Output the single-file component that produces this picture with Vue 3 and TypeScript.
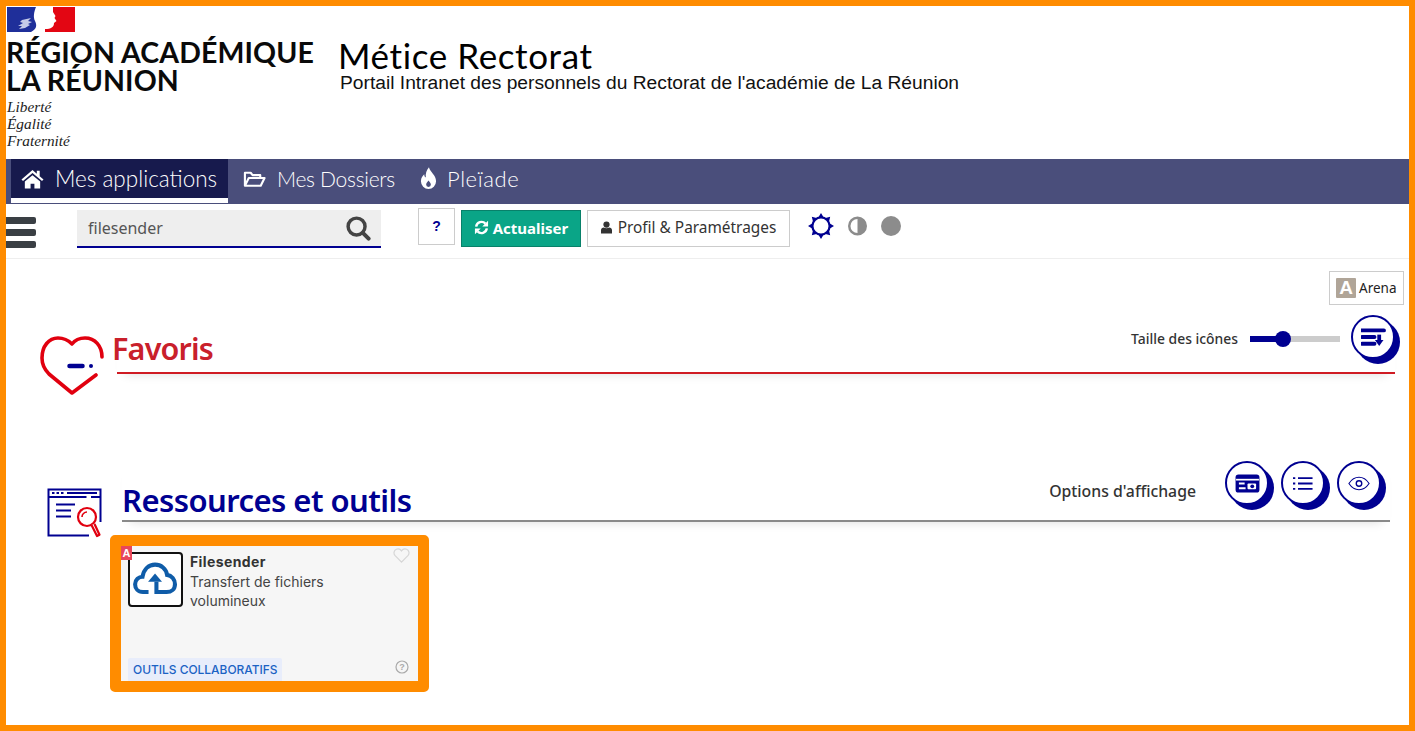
<script setup lang="ts">
</script>

<template>
  <div class="page">
    <header class="masthead">
      <div class="logo">
        <svg class="flag" viewBox="0 0 68 25" width="68" height="25">
          <rect width="68" height="25" fill="#fff" />
          <path d="M0 0H29C27 5 26 10 28 14 30 18 30 22 24 25H0z" fill="#1f2f9a" />
          <path d="M46 0H68V25H38V22C44 22 47 20 47 16L49.500 14 47.500 11 48.500 9 46 5z" fill="#e30613" />
          <path d="M15 13l9-2-3 3 4 1-4 2 2 1-5 3-6 1 3-3-4 0 5-3-3-1z" fill="#c6cbe8" />
        </svg>
        <div class="region">RÉGION ACADÉMIQUE<br />LA RÉUNION</div>
        <div class="motto">Liberté<br />Égalité<br />Fraternité</div>
      </div>
      <div class="site">
        <h1>Métice Rectorat</h1>
        <p>Portail Intranet des personnels du Rectorat de l'académie de La Réunion</p>
      </div>
    </header>

    <nav class="nav">
      <a class="tab active">
        <svg viewBox="0 0 24 20" width="23" height="20"><path d="M12 0.5L0.5 10.500l1.600 1.700L12 3.800l9.900 8.400 1.600-1.700L19.500 7V1.500h-3v3z" fill="#fff" /><path d="M4 12.500L12 6l8 6.500V20h-6v-5h-4v5H4z" fill="#fff" /></svg>
        Mes applications
      </a>
      <a class="tab dossiers">
        <svg viewBox="0 0 24 18" width="23" height="18"><path d="M2 16V2.500h6l2 2.500h8v3M2 16l4-8h16.500l-4 8z" fill="none" stroke="#fff" stroke-width="2.200" stroke-linejoin="round" /></svg>
        Mes Dossiers
      </a>
      <a class="tab pleiade">
        <svg viewBox="0 0 18 24" width="17" height="23"><path fill-rule="evenodd" d="M9.500 0c1 5 7.500 8 7.500 15a8 8 0 0 1-16 0c0-4 2-6 3.500-7.500 0 2 .7 3 1.700 3.500C5.500 7 7 3 9.500 0zM9 14c-1 1.500-2.500 2.500-2.500 4.400a2.500 2.500 0 0 0 5 0C11.500 16.500 10 15.500 9 14z" fill="#fff" /></svg>
        Pleïade
      </a>
    </nav>

    <div class="toolbar">
      <div class="burger"><i></i><i></i><i></i></div>
      <div class="search">
        <span>filesender</span>
        <svg viewBox="0 0 26 26" width="25" height="25"><circle cx="11" cy="11" r="8.800" fill="none" stroke="#444" stroke-width="3.600" /><path d="M17.500 17.500l6 6" stroke="#444" stroke-width="4.200" stroke-linecap="round" /></svg>
      </div>
      <button class="btn help">?</button>
      <button class="btn refresh">
        <svg viewBox="0 0 16 16" width="15" height="15">
          <path d="M2.300 7A5.800 5.800 0 0 1 12.200 3.800M13.700 9A5.800 5.800 0 0 1 3.800 12.200" fill="none" stroke="#fff" stroke-width="2.600" />
          <path d="M15 0.800V7H8.800zM1 15.200V9H7.200z" fill="#fff" />
        </svg>
        Actualiser
      </button>
      <button class="btn profile">
        <svg viewBox="0 0 12 14" width="11" height="13"><circle cx="6" cy="3.800" r="3.400" fill="#333" /><path d="M0 13.500V10c0-2 1.500-3 3-3 1.800 1.200 4.200 1.200 6 0 1.500 0 3 1 3 3v3.500z" fill="#333" /></svg>
        Profil &amp; Paramétrages
      </button>
      <div class="themes">
        <svg viewBox="0 0 26 26" width="26" height="26">
          <g fill="#000091"><path d="M13 0l3 5h-6zM13 26l3-5h-6zM0 13l5 3v-6zM26 13l-5 3v-6zM3.800 3.800l5.700 1.400-4.300 4.300zM22.200 3.800l-5.700 1.400 4.300 4.300zM3.800 22.200l5.700-1.400-4.300-4.300zM22.200 22.200l-5.700-1.400 4.300-4.300z" /></g>
          <circle cx="13" cy="13" r="8.600" fill="#fff" stroke="#000091" stroke-width="2.200" />
        </svg>
        <svg viewBox="0 0 20 20" width="19" height="20"><circle cx="10" cy="10" r="8.700" fill="#fff" stroke="#8c8c8c" stroke-width="2.600" /><path d="M10 1a9 9 0 0 1 0 18z" fill="#8c8c8c" /></svg>
        <span class="grey-dot"></span>
      </div>
    </div>

    <div class="arena-row">
      <div class="arena"><b>A</b>Arena</div>
    </div>

    <section class="fav">
      <svg class="fav-icon" viewBox="0 0 64 59" width="64" height="59">
        <path d="M62 21C62 10 55 2 45 2 39 2 35 4 32 8 28 4 24 2 18 2 9 2 2 10 2 22c0 7 3 12 7 16l23 19 24-18" fill="none" stroke="#e1000f" stroke-width="3.600" stroke-linecap="round" stroke-linejoin="round" />
        <path d="M29.500 30h13" stroke="#000091" stroke-width="4.500" stroke-linecap="round" />
        <circle cx="51" cy="30" r="2" fill="#000091" />
      </svg>
      <div class="fav-head">
        <h2 class="fav-title">Favoris</h2>
        <div class="size-tool">
          <span>Taille des icônes</span>
          <div class="slider"><i class="fill"></i><i class="thumb"></i></div>
          <button class="round">
            <svg viewBox="0 0 26 20" width="25" height="19"><path d="M1 2.500h23M1 9.500h13M1 16.500h13" stroke="#000091" stroke-width="4.200" stroke-linecap="round" /><path d="M19 7v8" stroke="#000091" stroke-width="4" /><path d="M14.500 12.500h9L19 19z" fill="#000091" /></svg>
          </button>
        </div>
      </div>
    </section>

    <section class="res">
      <svg class="res-icon" viewBox="0 0 56 50" width="56" height="50">
        <g fill="none" stroke="#000091" stroke-width="2">
          <path d="M53.500 34V1.500H1.500v46H42" />
          <path d="M1.500 9h38M44 9h9.500" />
        </g>
        <path d="M5 5h2.500M9.500 5h2.500M14 5h2.500M20 5h30M9 16.500h19M9 22.500h15M9 28.500h15" stroke="#000091" stroke-width="2" />
        <g fill="#fff" stroke="#e1000f" stroke-width="2.200">
          <circle cx="40" cy="29" r="9" />
          <path d="M44.500 37l5.500 11 2.500-1.300L47.500 36" stroke-linejoin="round" />
          <path d="M35 29a5 5 0 0 1 5-5" fill="none" stroke-width="1.600" />
        </g>
      </svg>
      <div class="res-head">
        <h2 class="res-title">Ressources et outils</h2>
        <div class="options">
          <span>Options d'affichage</span>
          <button class="round">
            <svg viewBox="0 0 28 22" width="27" height="21"><rect x="1.500" y="1.500" width="25" height="19" rx="3" fill="#000091" /><path d="M2 7h24" stroke="#fff" stroke-width="1.800" /><path d="M5 11h6M5 16h7" stroke="#fff" stroke-width="2" /><rect x="14" y="11" width="9" height="6" rx="1" fill="#fff" /><circle cx="19" cy="14" r="2" fill="#000091" /></svg>
          </button>
          <button class="round">
            <svg viewBox="0 0 22 16" width="20" height="15"><path d="M5.500 2h16M5.500 8h16M5.500 14h16" stroke="#000091" stroke-width="2" /><path d="M0 2h2.500M0 8h2.500M0 14h2.500" stroke="#000091" stroke-width="2" /></svg>
          </button>
          <button class="round">
            <svg viewBox="0 0 24 16" width="22" height="15"><path d="M1 8c6-9 16-9 22 0-6 9-16 9-22 0z" fill="none" stroke="#000091" stroke-width="1.200" /><circle cx="12" cy="8" r="3" fill="none" stroke="#000091" stroke-width="1.500" /></svg>
          </button>
        </div>
      </div>
    </section>

    <article class="card">
      <span class="badge">A</span>
      <svg class="heart" viewBox="0 0 18 16" width="17" height="15"><path d="M9 15L2.200 8.200C.2 6 .8 2.500 3.500 1.300 5.500.5 7.800 1.200 9 3c1.200-1.800 3.500-2.500 5.500-1.700 2.700 1.200 3.300 4.700 1.300 6.900z" fill="none" stroke="#d6d6d6" stroke-width="1.300" /></svg>
      <div class="card-top">
        <div class="app-icon">
          <svg viewBox="0 0 55 55" width="51" height="51">
            <path d="M20 41h-6c-5.500 0-8.500-4-8.500-8.500 0-5 4-8 8-8 1.500-8.500 7-13 13.500-13 6.500 0 12 4.500 13 11 5 .5 8.500 5 8.500 10 0 5.500-4 8.500-9 8.500H28.500V30" fill="none" stroke="#0f5ca8" stroke-width="4.400" />
            <path d="M27 21L19.500 30h15z" fill="#0f5ca8" />
          </svg>
        </div>
        <div class="app-text">
          <strong>Filesender</strong>
          <span>Transfert de fichiers<br />volumineux</span>
        </div>
      </div>
      <div class="card-foot">
        <span class="tag">OUTILS COLLABORATIFS</span>
        <svg viewBox="0 0 14 14" width="14" height="14"><circle cx="7" cy="7" r="6" fill="none" stroke="#aaa" stroke-width="1.200" /><text x="7" y="10.200" text-anchor="middle" font-size="9" font-weight="700" font-family="Liberation Sans" fill="#aaa">?</text></svg>
      </div>
    </article>
  </div>
</template>

<style>
html, body { margin: 0; background: #fff; }
</style>

<style scoped>
.page {
  box-sizing: border-box;
  width: 1415px;
  height: 731px;
  border: 6px solid #ff8c00;
  overflow: hidden;
  background: #fff;
  color: #222;
  font-family: "Noto Sans", sans-serif;
}
.masthead { display: flex; height: 153px; }
.logo { width: 333px; flex: none; padding: 1px 0 0 1px; box-sizing: border-box; }
.flag { display: block; }
.region {
  margin: 6px 0 0 -1px;
  font: 700 28.500px/28px Lato, sans-serif;
  letter-spacing: .1px;
  color: #0a0a0a;
  white-space: nowrap;
}
.motto {
  margin-top: 4px;
  font: italic 400 15.300px/17px "Liberation Serif", serif;
  color: #222;
}
.site { padding-top: 30px; margin-left: -1px; }
.site h1 { margin: 0; font: 400 35px/38px Lato, sans-serif; color: #000; letter-spacing: .6px; }
.site p { margin: -1px 0 0 2px; font: 400 19.230px/20px "Liberation Sans", sans-serif; color: #111; }
.nav { display: flex; height: 45px; padding-left: 5px; background: #4a4e7b; }
.tab {
  display: flex;
  align-items: center;
  gap: 11px;
  padding: 0 10px 6px 15px;
  height: 45px;
  box-sizing: border-box;
  color: #fff;
  font: 300 21px/1 Lato, sans-serif;
}
.dossiers { letter-spacing: -.3px; }
.pleiade { gap: 10px; font-size: 22px; letter-spacing: .6px; }
.tab.active {
  width: 217px;
  padding: 0 0 5px 10px;
  background: #171a4d;
  font-size: 22.500px;
  box-shadow: inset 0 -1px 0 #4a4e7b, inset 0 -6px 0 #fff;
}
.toolbar { display: flex; align-items: flex-start; height: 54px; border-bottom: 1px solid #eee; }
.burger { width: 30px; margin-top: 13px; display: flex; flex-direction: column; gap: 5px; }
.burger i { display: block; height: 7px; background: #3a3f44; border-radius: 0 2px 2px 0; }
.search {
  width: 304px;
  height: 38px;
  margin: 6px 0 0 41px;
  padding: 0 10px 0 11px;
  box-sizing: border-box;
  display: flex;
  align-items: center;
  justify-content: space-between;
  background: #eee;
  border-bottom: 2px solid #000091;
  color: #555;
  font: 400 16px "Noto Sans", sans-serif;
}
.btn {
  box-sizing: border-box;
  height: 37px;
  margin-top: 6px;
  display: flex;
  align-items: center;
  justify-content: center;
  gap: 4px;
  padding: 0 0 2px;
  background: #fff;
  border: 1px solid #ccc;
  font: 400 15.400px "Noto Sans", sans-serif;
  color: #333;
}
.help { width: 37px; margin: 4px 0 0 37px; color: #000091; font: 700 14px "Liberation Sans", sans-serif; padding-bottom: 2px; }
.refresh { width: 120px; margin-left: 6px; background: #0aa587; border-color: #08816a; color: #fff; font-weight: 700; font-size: 15px; }
.profile { width: 203px; margin-left: 6px; gap: 6px; }
.themes { display: flex; align-items: center; margin: 9px 0 0 18px; gap: 14px; }
.grey-dot { width: 20px; height: 20px; border-radius: 50%; background: #8c8c8c; }
.arena-row { display: flex; justify-content: flex-end; padding: 12px 5px 0 0; }
.arena {
  box-sizing: border-box;
  width: 75px;
  height: 34px;
  display: flex;
  align-items: center;
  gap: 3px;
  padding-left: 6px;
  border: 1px solid #ccc;
  font: 400 13.500px "Noto Sans", sans-serif;
  color: #222;
}
.arena b {
  width: 20px; height: 20px;
  background: #b0a598;
  color: #fff;
  font: 700 19px/20px "Liberation Sans", sans-serif;
  text-align: center;
  border-radius: 1px;
}
.fav { display: flex; align-items: flex-start; height: 146px; margin-top: 10px; padding-left: 34px; }
.fav-icon { flex: none; margin-top: 21px; }
.fav-head {
  width: 1278px;
  height: 57px;
  margin-left: 13px;
  display: flex;
  justify-content: space-between;
  border-bottom: 2px solid #cf1b23;
  box-shadow: 0 8px 10px -8px rgba(0, 0, 0, .14);
}
.fav-title {
  margin: 15px 0 0 -5px;
  font: 600 30.500px/36px "Noto Sans", sans-serif;
  color: #c9202b;
  letter-spacing: -.8px;
}
.size-tool { display: flex; align-items: flex-start; }
.size-tool span { margin: 14px 12px 0 0; font: 500 13.900px/20px "Noto Sans", sans-serif; color: #333; }
.slider { position: relative; width: 90px; height: 6px; margin: 21px 11px 0 0; background: #ccc; }
.fill { position: absolute; left: 0; top: 0; width: 33px; height: 6px; background: #000091; }
.thumb { position: absolute; left: 25px; top: -5px; width: 16px; height: 16px; border-radius: 50%; background: #000091; }
.round {
  box-sizing: border-box;
  flex: none;
  width: 44px;
  height: 44px;
  padding: 0;
  display: flex;
  align-items: center;
  justify-content: center;
  background: #fff;
  border: 2px solid #000091;
  border-radius: 50%;
  box-shadow: 5px 5px 0 #000091;
}
.res { display: flex; align-items: flex-start; height: 74px; padding-left: 41px; }
.res-icon { flex: none; margin-top: 27px; }
.res-head {
  width: 1268px;
  height: 59px;
  margin-left: 19px;
  display: flex;
  justify-content: space-between;
  border-bottom: 2px solid #8a8a8a;
  box-shadow: 0 8px 10px -8px rgba(0, 0, 0, .14);
}
.res-title {
  margin: 20px 0 0 0;
  font: 600 31px/38px "Noto Sans", sans-serif;
  color: #000091;
  letter-spacing: -.55px;
}
.options { display: flex; align-items: flex-start; gap: 12px; margin-right: 9px; }
.options span { margin: 19px 17px 0 0; font: 500 15.800px/22px "Noto Sans", sans-serif; color: #333; }
.card {
  position: relative;
  box-sizing: border-box;
  width: 319px;
  height: 157px;
  margin-left: 104px;
  padding: 6px 7px 0;
  display: flex;
  flex-direction: column;
  background: #f6f6f6;
  border: 11px solid #ff8c00;
  border-radius: 5px;
  background-clip: padding-box;
}
.badge {
  position: absolute;
  left: 0;
  top: 0;
  width: 11px;
  height: 14px;
  background: #e8475c;
  color: #fff;
  font: 700 11px/14px "Liberation Sans", sans-serif;
  text-align: center;
}
.heart { position: absolute; right: 8px; top: 2px; }
.card-top { display: flex; gap: 7px; }
.app-icon {
  box-sizing: border-box;
  width: 55px;
  height: 55px;
  background: #fff;
  border: 2px solid #111;
  border-radius: 4px;
}
.app-icon svg { display: block; }
.app-text { display: flex; flex-direction: column; font: 400 14px/19px "Inter", sans-serif; color: #444; }
.app-text strong { font-weight: 700; color: #333; line-height: 20px; letter-spacing: .4px; }
.card-foot { margin-top: auto; display: flex; justify-content: space-between; padding-right: 2px; height: 23px; }
.card-foot svg { margin-top: 2px; }
.tag {
  padding: 1px 4px 0 5px;
  background: #e8edfb;
  border-radius: 2px 2px 0 0;
  color: #1b62c4;
  font: 500 11.950px/22px "Inter", sans-serif;
}
</style>
